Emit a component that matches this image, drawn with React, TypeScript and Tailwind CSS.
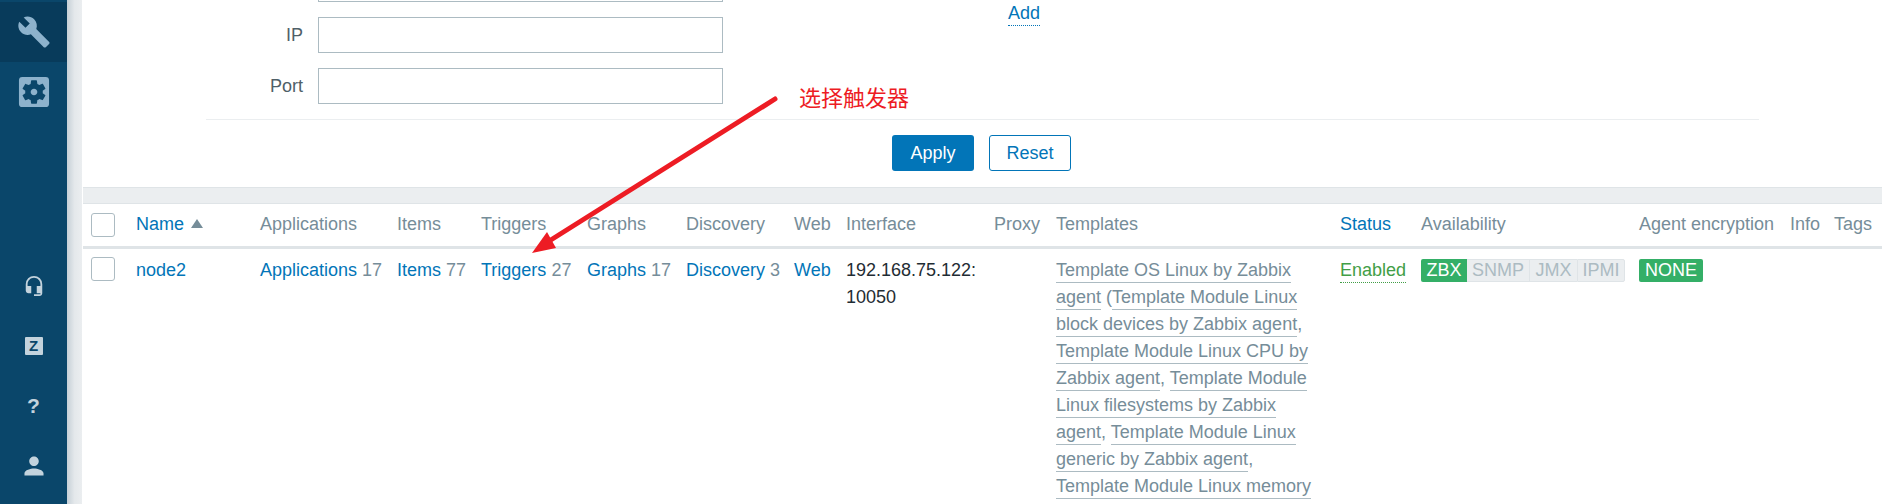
import { MdBuild, MdSettingsApplications, MdHeadsetMic, MdPerson } from "react-icons/md";

const tpl = ["Template OS Linux by Zabbix agent"];
function L({ children }: { children: React.ReactNode }) {
  return <a className="text-[#768d99] border-b border-[#acbbc2] pb-[2px]">{children}</a>;
}
function A({ children, n }: { children: React.ReactNode; n?: number }) {
  return (
    <>
      <a className="text-[#0275b8]">{children}</a>
      {n !== undefined && <span className="text-[#768d99]"> {n}</span>}
    </>
  );
}
const Check = () => <span className="block w-6 h-6 bg-white border border-[#acbbc2] rounded-[3px]" />;
const Th = ({ w, children, blue }: { w: string; children?: React.ReactNode; blue?: boolean }) => (
  <th className={`${w} pl-2 font-normal text-left whitespace-nowrap ${blue ? "text-[#0275b8]" : "text-[#768d99]"}`}>{children}</th>
);
const Td = ({ children }: { children?: React.ReactNode }) => <td className="pl-2 pt-[8px] align-top leading-[27px]">{children}</td>;

function Side({ active, children, light }: { active?: boolean; children: React.ReactNode; light?: boolean }) {
  return (
    <div className={`h-[60px] flex items-center justify-center ${active ? "bg-[#083b5b]" : ""} ${light ? "text-[#c3d3dd]" : "text-[#8db2cc]"}`}>
      {children}
    </div>
  );
}

export default function App() {
  return (
    <div className="relative flex h-[504px] w-[1882px] overflow-hidden bg-[#ebeef0] text-[18px] text-[#1f2c33] [font-family:'Liberation_Sans','Noto_Sans_CJK_SC',sans-serif]">
      <aside className="w-[67px] shrink-0 bg-[#0a466a] pt-[2px] flex flex-col justify-between pb-[8px]">
        <div>
          <Side active><MdBuild size={34} /></Side>
          <Side><MdSettingsApplications size={34} className="scale-[1.18]" /></Side>
        </div>
        <div>
          <Side light><MdHeadsetMic size={20} className="scale-[1.1]" /></Side>
          <Side light>
            <span className="w-[18px] h-[18px] bg-[#c3d3dd] rounded-[1px] text-[#0a466a] font-bold text-[15px] leading-[18px] text-center">Z</span>
          </Side>
          <Side light><span className="font-bold text-[21px]">?</span></Side>
          <Side light><MdPerson size={26} className="scale-[1.1]" /></Side>
        </div>
      </aside>
      <div className="w-4 shrink-0 bg-gradient-to-r from-[#c6d0d7] via-[#e4e8eb] to-[#ebeef0] border-r border-white" />
      <main className="flex-1 min-w-0">
        <section className="h-[188px] bg-white border-b border-[#dfe4e7]">
          <div className="flex h-[119px]">
            <div className="w-[655px] shrink-0 flex flex-col gap-[15px] mt-[-34px]">
              {["", "IP", "Port"].map((l) => (
                <div key={l} className="flex items-center h-[36px]">
                  <label className="w-[235px] pr-[15px] text-right text-[#4f5f68]">{l}</label>
                  <span className="w-[405px] h-[36px] border border-[#acbbc2] bg-white" />
                </div>
              ))}
            </div>
            <a className="ml-[270px] self-start mt-[1px] text-[#0275b8] border-b border-dotted border-[#0275b8] leading-[24px] h-[25px]">Add</a>
          </div>
          <div className="mx-[123px] border-t border-[#ebeef0]" />
          <div className="flex justify-center gap-[15px] pt-[15px] pr-[2px]">
            <button className="w-[82px] h-[36px] rounded-[3px] bg-[#0275b8] text-white">Apply</button>
            <button className="w-[82px] h-[36px] rounded-[3px] border border-[#0275b8] bg-white text-[#0275b8]">Reset</button>
          </div>
        </section>
        <section className="mt-[15px] h-[301px] bg-white border-t border-[#dfe4e7]">
          <table className="table-fixed border-collapse w-[1799px]">
            <thead>
              <tr className="h-[43px] border-b-[3px] border-[#dfe4e7]">
                <Th w="w-[45px]"><Check /></Th>
                <Th w="w-[124px]" blue>Name <span className="inline-block ml-[2px] mb-[2px] border-x-[6px] border-x-transparent border-b-[9px] border-b-[#768d99]" /></Th>
                <Th w="w-[137px]">Applications</Th>
                <Th w="w-[84px]">Items</Th>
                <Th w="w-[106px]">Triggers</Th>
                <Th w="w-[99px]">Graphs</Th>
                <Th w="w-[108px]">Discovery</Th>
                <Th w="w-[52px]">Web</Th>
                <Th w="w-[148px]">Interface</Th>
                <Th w="w-[62px]">Proxy</Th>
                <Th w="w-[284px]">Templates</Th>
                <Th w="w-[81px]" blue>Status</Th>
                <Th w="w-[218px]">Availability</Th>
                <Th w="w-[151px]">Agent encryption</Th>
                <Th w="w-[44px]">Info</Th>
                <Th w="w-[56px]">Tags</Th>
              </tr>
            </thead>
            <tbody>
              <tr>
                <Td><Check /></Td>
                <Td><A>node2</A></Td>
                <Td><A n={17}>Applications</A></Td>
                <Td><A n={77}>Items</A></Td>
                <Td><A n={27}>Triggers</A></Td>
                <Td><A n={17}>Graphs</A></Td>
                <Td><A n={3}>Discovery</A></Td>
                <Td><A>Web</A></Td>
                <Td>192.168.75.122: 10050</Td>
                <Td />
                <td className="pl-2 pr-3 pt-[8px] align-top leading-[27px] text-[#768d99]">
                  <L>{tpl[0]}</L> (<L>Template Module Linux block devices by Zabbix agent</L>, <L>Template Module Linux CPU by Zabbix agent</L>, <L>Template Module Linux filesystems by Zabbix agent</L>, <L>Template Module Linux generic by Zabbix agent</L>, <L>Template Module Linux memory by Zabbix agent</L>
                </td>
                <Td><span className="text-[#429e47] border-b border-dotted border-[#429e47] pb-[2px]">Enabled</span></Td>
                <Td>
                  <div className="flex h-[23px] mt-[2px] w-[204px] leading-[23px] text-center text-[#acbbc2]">
                    <span className="w-[46px] bg-[#34af67] text-white rounded-l-[2px]">ZBX</span>
                    <span className="w-[62px] bg-[#ebeef0] border-y border-[#dfe4e7] leading-[21px]">SNMP</span>
                    <span className="w-[48px] bg-[#ebeef0] border-y border-l border-[#dfe4e7] leading-[21px]">JMX</span>
                    <span className="w-[48px] bg-[#ebeef0] border border-[#dfe4e7] rounded-r-[2px] leading-[21px]">IPMI</span>
                  </div>
                </Td>
                <Td><span className="block mt-[2px] w-[64px] h-[23px] leading-[23px] text-center bg-[#34af67] text-white rounded-[2px]">NONE</span></Td>
                <Td />
                <Td />
              </tr>
            </tbody>
          </table>
        </section>
      </main>
      <span className="absolute left-[799px] top-[85px] text-[22px] leading-[28px] text-[#ed1c24]">选择触发器</span>
      <svg className="absolute left-0 top-0 pointer-events-none" width="1882" height="504">
        <line x1="775" y1="99" x2="546" y2="243" stroke="#ed1c24" strokeWidth="5" strokeLinecap="round" />
        <polygon points="532,253 547,232 556,248" fill="#ed1c24" />
      </svg>
    </div>
  );
}
